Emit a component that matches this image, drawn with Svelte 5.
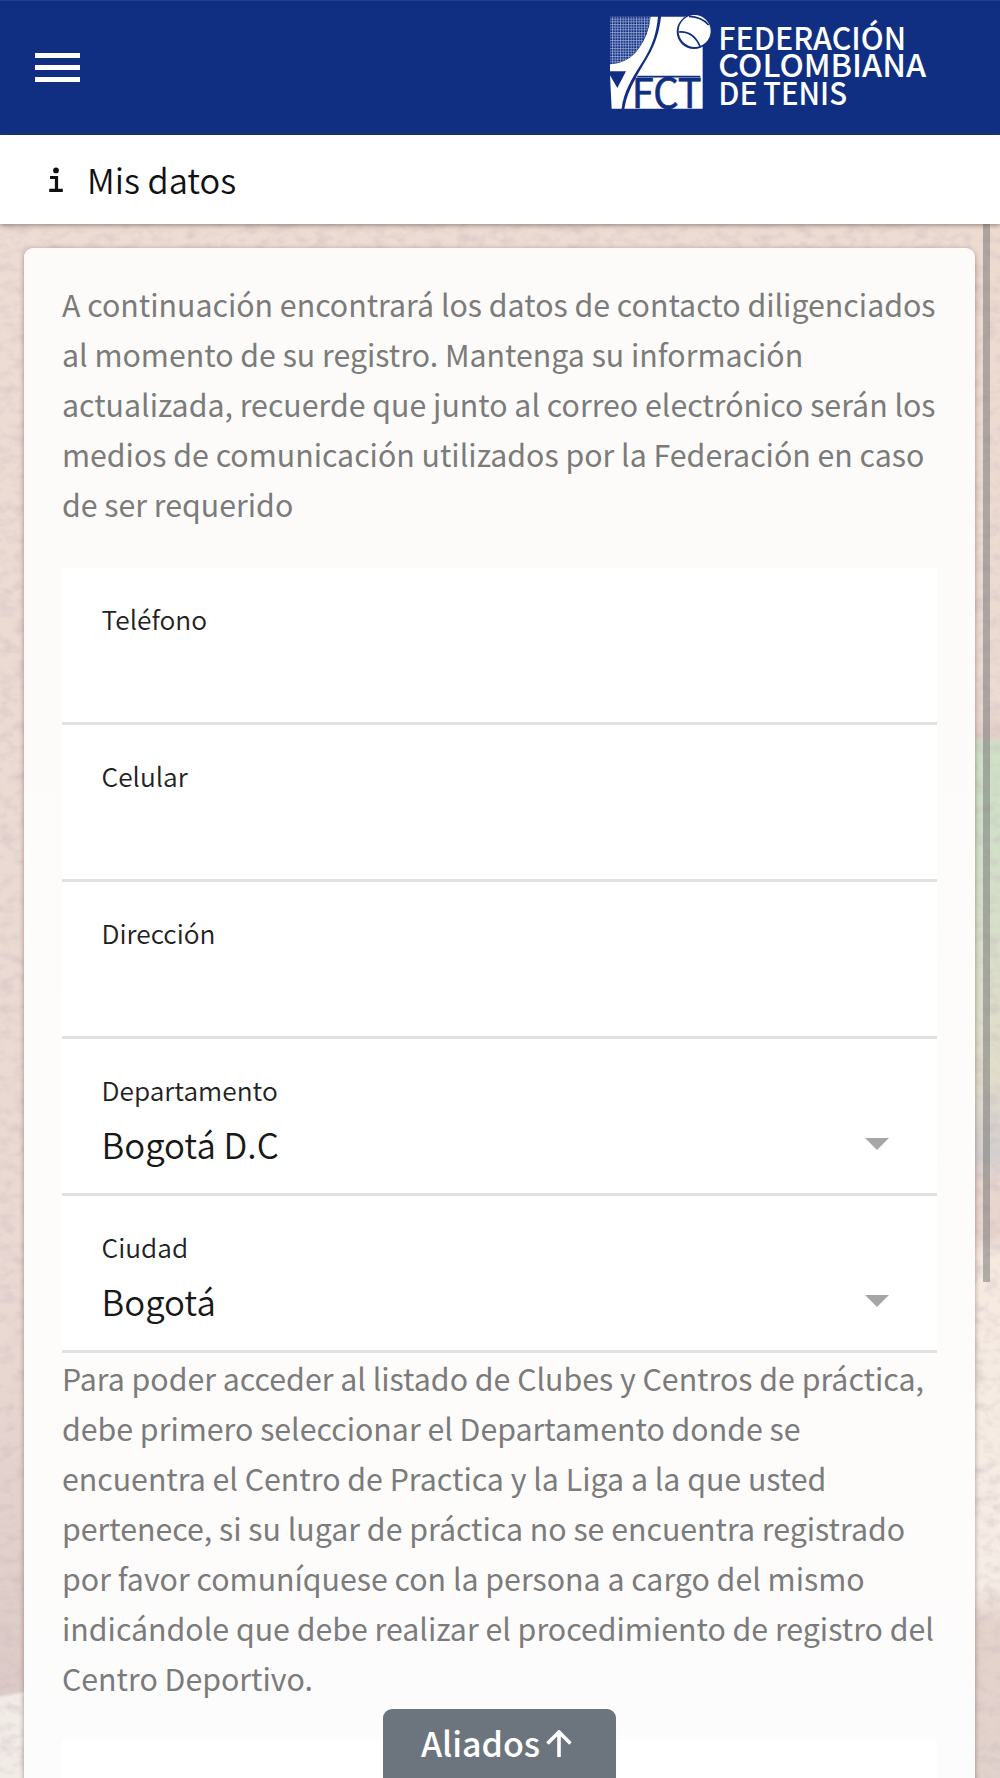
<script>
  const fields = [
    { label: 'Teléfono', value: '', select: false },
    { label: 'Celular', value: '', select: false },
    { label: 'Dirección', value: '', select: false },
    { label: 'Departamento', value: 'Bogotá D.C', select: true },
    { label: 'Ciudad', value: 'Bogotá', select: true }
  ];
  const intro = [
    'A continuación encontrará los datos de contacto diligenciados',
    'al momento de su registro. Mantenga su información',
    'actualizada, recuerde que junto al correo electrónico serán los',
    'medios de comunicación utilizados por la Federación en caso',
    'de ser requerido'
  ];
  const help = [
    'Para poder acceder al listado de Clubes y Centros de práctica,',
    'debe primero seleccionar el Departamento donde se',
    'encuentra el Centro de Practica y la Liga a la que usted',
    'pertenece, si su lugar de práctica no se encuentra registrado',
    'por favor comuníquese con la persona a cargo del mismo',
    'indicándole que debe realizar el procedimiento de registro del',
    'Centro Deportivo.'
  ];
</script>

<div class="screen">
  <header class="topbar">
    <button class="menu" aria-label="Menú"><span></span><span></span><span></span></button>
    <svg class="logo" viewBox="0 0 1140 390" role="img" aria-label="Federación Colombiana de Tenis">
      <defs>
        <pattern id="net" width="8" height="8" patternUnits="userSpaceOnUse">
          <path d="M0 1.5H8M1.5 0V8" stroke="#a9b6da" stroke-width="2" />
        </pattern>
      </defs>
      <path d="M90 50H212Q200 115 168 155Q140 190 90 193Z" fill="url(#net)" />
      <path d="M212 50H234C224 150 186 180 150 248Q128 290 125 326H95L90 226L112 264L138 214H90V193Q146 190 177 145Q206 105 212 50Z" fill="#fff" />
      <path d="M243 50H368V326H133Q140 282 166 237C194 180 232 145 243 50Z" fill="#fff" />
      <path d="M172 230H361" stroke="#102f82" stroke-width="5" />
      <text class="fct" x="155" y="324" textLength="210" lengthAdjust="spacingAndGlyphs">FCT</text>
      <circle cx="342" cy="95" r="52" fill="#102f82" />
      <circle cx="344" cy="93" r="48" fill="#fff" />
      <path d="M297 96Q340 93 360 139M327 49Q365 50 386 75" fill="none" stroke="#102f82" stroke-width="5" />
      <g class="name">
        <text x="415" y="149" textLength="563" lengthAdjust="spacingAndGlyphs">FEDERACIÓN</text>
        <text x="415" y="231" textLength="623" lengthAdjust="spacingAndGlyphs">COLOMBIANA</text>
        <text x="415" y="314" textLength="118" lengthAdjust="spacingAndGlyphs">DE</text>
        <text x="549" y="314" textLength="252" lengthAdjust="spacingAndGlyphs">TENIS</text>
      </g>
    </svg>
  </header>

  <div class="titlebar">
    <svg class="info" viewBox="0 0 14 26" aria-hidden="true">
      <circle cx="7" cy="3.4" r="2.9" />
      <path d="M1 10.5H7.5V23.3M.2 23.3H13.8" fill="none" stroke="#111" stroke-width="3.2" />
    </svg>
    <h1>Mis datos</h1>
  </div>

  <main class="court">
    <svg class="grain" aria-hidden="true">
      <filter id="clay" x="0" y="0" width="100%" height="100%">
        <feTurbulence type="fractalNoise" baseFrequency=".07 .1" numOctaves="3" seed="8" />
        <feColorMatrix values="0 0 0 0 .55  0 0 0 0 .45  0 0 0 0 .5  1.4 0 0 0 -.6" />
      </filter>
      <rect width="100%" height="100%" filter="url(#clay)" />
    </svg>
    <section class="card">
      <p>{#each intro as line}<span>{line}</span>{/each}</p>
      <div class="form">
        {#each fields as f}
          <div class="field">
            <div class="texts">
              <div class="label">{f.label}</div>
              <div class="value">{f.value}</div>
            </div>
            {#if f.select}
              <svg class="caret" viewBox="0 0 24 12" aria-hidden="true"><path d="M0 0H24L12 12Z" /></svg>
            {/if}
          </div>
        {/each}
      </div>
      <p class="help">{#each help as line}<span>{line}</span>{/each}</p>
      <div class="next"></div>
    </section>
    <div class="scroll"></div>
    <button class="allies">
      <span>Aliados</span>
      <svg viewBox="0 0 26 28" aria-hidden="true"><path d="M13 27V2M1.5 13.5L13 2L24.5 13.5" /></svg>
    </button>
  </main>
</div>

<style>
  :global(body) { margin: 0; }
  .screen {
    width: 1000px;
    height: 1778px;
    display: flex;
    flex-direction: column;
    overflow: hidden;
    font-family: "Noto Sans CJK SC", "Noto Sans", sans-serif;
  }
  button { border: 0; margin: 0; font-family: inherit; }
  .topbar {
    height: 135px;
    box-sizing: border-box;
    flex: none;
    display: flex;
    justify-content: space-between;
    align-items: flex-start;
    padding: 0 40px 0 35px;
    background: #102f82;
    border-top: 1px solid #21408c;
  }
  .menu {
    display: flex;
    flex-direction: column;
    gap: 7px;
    margin-top: 52px;
    padding: 0;
    background: none;
  }
  .menu span { width: 45px; height: 5px; background: #fff; }
  .logo { width: 380px; height: 130px; margin-top: -1px; }
  .name { fill: #fff; font: 500 94px "Noto Sans CJK SC", sans-serif; }
  .fct { fill: #102f82; font: 400 124px "Noto Sans CJK SC", sans-serif; stroke: #102f82; stroke-width: 2; }
  .titlebar {
    position: relative;
    z-index: 1;
    height: 89px;
    box-sizing: border-box;
    flex: none;
    display: flex;
    align-items: center;
    padding-left: 49px;
    background: #fff;
    box-shadow: 0 1px 5px rgba(70, 50, 40, .55);
  }
  .info { width: 14px; height: 26px; margin-right: 24px; fill: #111; }
  h1 {
    margin: 0 0 2px;
    color: #111;
    font-size: 34.4px;
    font-weight: 350;
    line-height: 50px;
  }
  .court {
    position: relative;
    flex: 1;
    min-height: 0;
    padding: 24px 25px 0 24px;
    background:
      linear-gradient(170deg, transparent 1448px, #f2ece7 1452px) left / 24px 100% no-repeat,
      linear-gradient(#eddbd0 0, #ecdbd2 480px, #e2cfc8 512px, #cfe1c6 520px, #d1e0c8 620px, #e2decb 850px, #d4cfcf 930px, #e8d6cf 960px, #e8d5ce 1010px, #f6eae0 1035px, #f6ede6 1360px, #e4d3cb 1400px, #e2d2cc) right / 25px 100% no-repeat,
      linear-gradient(#ecdcd3, #ead9d2 1100px, #dccbc7 1450px);
  }
  .grain { position: absolute; inset: 0; width: 100%; height: 100%; opacity: .6; }
  .card {
    position: relative;
    height: 1600px;
    box-sizing: border-box;
    padding: 32px 38px 0;
    border-radius: 9px 9px 0 0;
    background: linear-gradient(#fcfbf9, #fdfcfb 1100px, #fdfcfc);
    box-shadow: 0 1px 5px rgba(90, 70, 60, .5);
  }
  p {
    margin: 0;
    color: #7b7b7b;
    font-size: 30.3px;
    line-height: 49.9px;
  }
  p span { display: block; white-space: nowrap; }
  .form { margin-top: 38.5px; }
  .field {
    height: 157px;
    box-sizing: border-box;
    display: flex;
    justify-content: space-between;
    padding: 31px 48px 0 39.5px;
    background: #fff;
    border-bottom: 3px solid #e1e1e1;
  }
  .label { color: #222; font-size: 26.3px; line-height: 40px; font-weight: 350; }
  .value { color: #181818; font-size: 34.8px; line-height: 50px; font-weight: 350; margin-top: 8.5px; }
  .caret { width: 24px; height: 12px; margin-top: 68px; fill: #a6a6a6; }
  .next { height: 100px; margin-top: 37px; background: #fff; }
  .help { line-height: 50px; }
  .scroll {
    position: absolute;
    top: 0;
    right: 10px;
    width: 7px;
    height: 1058px;
    background: rgba(112, 112, 112, .5);
  }
  .allies {
    position: absolute;
    left: 383px;
    bottom: 0;
    width: 233px;
    height: 69px;
    display: flex;
    align-items: center;
    justify-content: center;
    gap: 6px;
    padding: 0 6px 0 0;
    box-sizing: border-box;
    border-radius: 9px 9px 0 0;
    background: #6c757d;
    color: #fff;
    font-size: 34px;
    font-weight: 500;
  }
  .allies span { margin-bottom: 3px; }
  .allies svg { width: 26px; height: 28px; fill: none; stroke: #fff; stroke-width: 3.6; }
</style>
